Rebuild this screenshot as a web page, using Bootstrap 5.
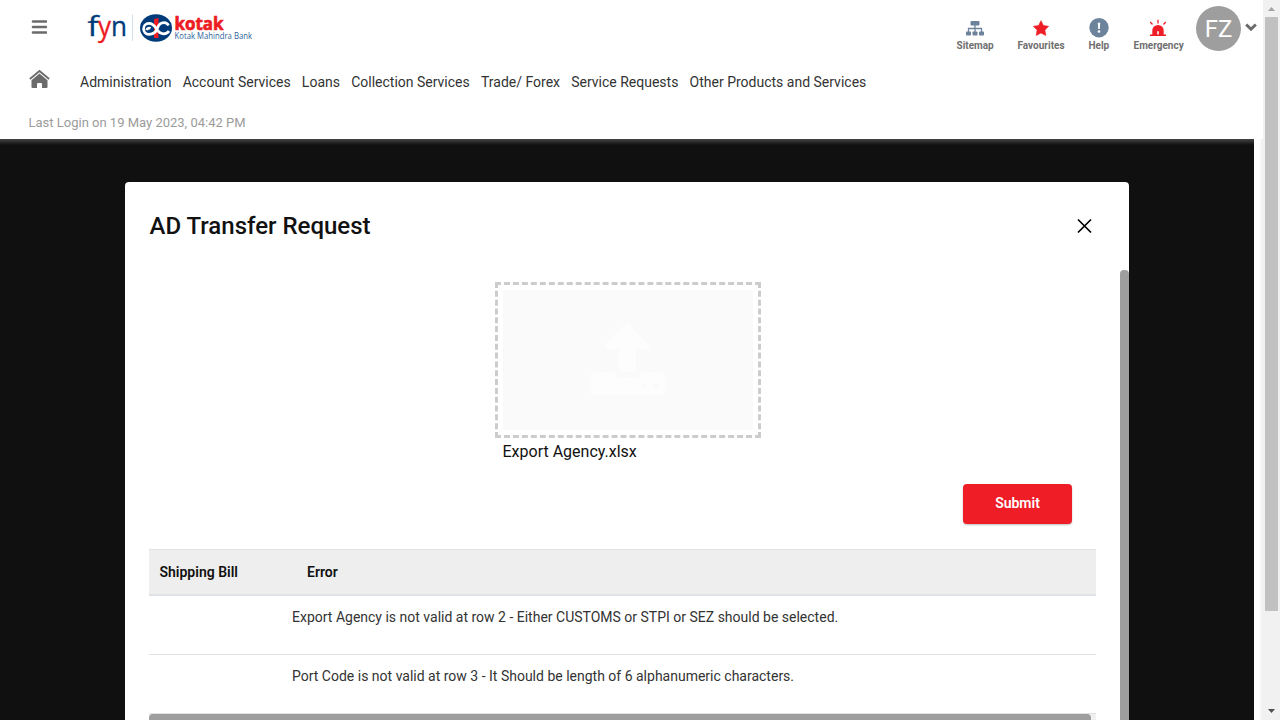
<!DOCTYPE html>
<html lang="en">
<head>
<meta charset="utf-8">
<meta name="viewport" content="width=device-width, initial-scale=1">
<title>AD Transfer Request</title>
<link href="https://cdn.jsdelivr.net/npm/bootstrap@5.3.0/dist/css/bootstrap.min.css" rel="stylesheet">
<style>
  body { font-family: Roboto, "Liberation Sans", sans-serif; height: 720px; overflow: hidden; color: #111; background: #fff; }
  svg { display: block; flex: none; }
  .page-main { width: 1263px; height: 720px; }
  .site-header { height: 139px; }
  .top-row { height: 58px; padding-left: 31px; padding-right: 6px; }
  .menu-btn { margin-top: 20px; }
  .brand-logo { margin: 8px 0 0 39px; overflow: visible; }
  .quick-links { gap: 23px; padding-top: 18px; margin-right: 12.5px; }
  .quick-link { font-size: 10px; line-height: 12px; font-weight: 700; color: #6f6f6f; white-space: nowrap; text-decoration: none; }
  .quick-link svg { margin: 0 auto 2px; transform: translateX(-1px); }
  .avatar { width: 45px; height: 45px; margin-top: 6px; background: #9e9e9e; color: #fff; font-size: 24px; }
  .chevron { margin: 23px 0 0 4px; }
  .main-nav { height: 48px; padding-left: 29px; }
  .main-nav .home { width: 51px; }
  .main-nav .nav-link { padding: 0; margin-right: 11.2px; font-size: 14px; line-height: 20px; color: #333; white-space: nowrap; }
  .last-login { font-size: 13px; line-height: 16px; color: #9b9b9b; padding: 9px 0 0 28.500px; }
  .backdrop-area { width: 1254px; background: linear-gradient(#444, #101010 6px); padding: 43px 125px 0; }
  .side-strip { width: 9px; background: linear-gradient(90deg, #fff 55%, #eee); }
  .dialog-box { height: 538px; border-radius: 4px 4px 0 0; overflow: hidden; }
  .dialog-head { height: 88px; padding: 0 36px 0 24.500px; }
  .dialog-head h1 { font-size: 24px; font-weight: 500; margin: 0; }
  .dialog-body { height: 450px; }
  .dialog-content { width: 995px; padding: 12px 24px 0; }
  .dialog-scroll { width: 9px; background: #9e9e9e; border-radius: 4px 4px 0 0; }
  .upload-wrap { width: 266px; margin-left: 346px; }
  .upload-box { height: 156px; border: 3px dashed #ccc; padding: 5px; }
  .upload-fill { background: #fafafa; height: 140px; }
  .file-name { font-size: 16px; line-height: 24px; padding: 2px 0 0 7.500px; }
  .btn-submit { width: 109px; height: 40px; background: #ee1d26; color: #fff; border: 0; border-radius: 4px; font-size: 14px; font-weight: 600; padding: 0 0 2px; box-shadow: 0 1px 2px rgba(0,0,0,.25); margin: 20px 24px 25px 0; }
  .error-table { font-size: 14px; line-height: 20px; border-collapse: separate; border-spacing: 0; border-top: 1px solid #dee2e6; table-layout: fixed; }
  .error-table th { background: #eee; height: 46px; font-weight: 600; padding: 0 10.500px; vertical-align: middle; border-bottom: 2px solid #dee2e6; color: #111; }
  .error-table th + th { padding-left: 15px; }
  .error-table td { height: 59px; padding: 11px 0 0; border-bottom: 1px solid #dee2e6; color: #333; }
  .h-scroll { height: 10px; background: #f1f1f1; }
  .h-thumb { width: 942px; height: 10px; background: #9e9e9e; border-radius: 4px; }
  .win-scroll { width: 17px; background: #f1f1f1; padding: 7px 0 7px; }
  .win-thumb { width: 13px; height: 594px; background: #c1c1c1; margin-top: 6px; }
</style>
</head>
<body class="d-flex">
<div class="page-main d-flex flex-column">
  <header class="site-header bg-white">
    <div class="top-row d-flex align-items-start">
      <svg class="menu-btn" width="16" height="14" viewBox="0 0 16 14" stroke="#6b6b6b" stroke-width="2.6" stroke-linecap="round"><path d="M2 1.500h13M2 7h13M2 12.500h13"/></svg>
      <svg class="brand-logo" width="170" height="40" viewBox="86 8 170 40">
        <g font-family="Open Sans" font-size="27" fill="#003b79" stroke="#003b79" stroke-width=".3">
          <text x="87.5" y="36" textLength="11" lengthAdjust="spacingAndGlyphs">f</text>
          <text x="98" y="36" fill="#ed1c24" stroke="#ed1c24" textLength="13" lengthAdjust="spacingAndGlyphs">y</text>
          <text x="111" y="36" textLength="16" lengthAdjust="spacingAndGlyphs">n</text>
        </g>
        <path d="M132.500 14.500V41" stroke="#d5deeb"/>
        <ellipse cx="156" cy="28" rx="16" ry="13.700" fill="#003b79"/>
        <path d="M154 19l4.500-1v20H154z" fill="#ed1c24"/>
        <path d="M168.500 25.500C167.500 23.300 165.800 22.600 164 22.600C160 22.600 158.500 25 157.500 28C156 32.500 153.500 34.300 149 34.300C141.800 34.300 141.800 23.300 149 23.300C157 23.300 155.500 33.800 163.500 33.800C166.500 33.800 168 32.800 169 31M150.500 28.500C149 27.600 147.500 28 146.500 30" fill="none" stroke="#fff" stroke-width="2.700"/>
        <text x="174.500" y="30" font-family="Open Sans" font-weight="700" font-size="17" fill="#ed1c24" stroke="#ed1c24" stroke-width=".7" textLength="49" lengthAdjust="spacingAndGlyphs">kotak</text>
        <text x="174.500" y="38.500" font-family="Open Sans" font-size="8.400" fill="#2c5f9b" textLength="77.500" lengthAdjust="spacingAndGlyphs">Kotak Mahindra Bank</text>
      </svg>
      <div class="quick-links d-flex ms-auto">
        <a class="quick-link" style="width:38px">
          <svg width="18" height="20" viewBox="0 0 18 20" fill="#6d839c"><rect x="4.500" y="3" width="9" height="4.500" rx="1"/><path d="M9 7v7M2.500 14v-3.500h13V14" fill="none" stroke="#6d839c" stroke-width="1.300"/><rect y="13.500" width="5" height="4" rx=".8"/><rect x="6.500" y="13.500" width="5" height="4" rx=".8"/><rect x="13" y="13.500" width="5" height="4" rx=".8"/></svg>Sitemap</a>
        <a class="quick-link" style="width:48px">
          <svg width="16" height="20" viewBox="0 0 16 20" fill="#ee1d26"><path d="M8 2.700l2.400 4.800 5.200.8-3.700 3.800.9 5.400L8 15l-4.800 2.500.9-5.400L.4 8.300l5.200-.8z" stroke="#ee1d26" stroke-width=".6" stroke-linejoin="round"/></svg>Favourites</a>
        <a class="quick-link" style="width:22px">
          <svg width="20" height="20" viewBox="0 0 20 20"><circle cx="10" cy="9.700" r="9.700" fill="#6d839c"/><path d="M8.800 4.700h2.400l-.4 6.300H9.200z" fill="#fff"/><circle cx="10" cy="13.500" r="1.300" fill="#fff"/></svg>Help</a>
        <a class="quick-link" style="width:50px">
          <svg width="18" height="20" viewBox="0 0 18 20"><path d="M3.300 16.500v-4a5.700 5.600 0 0 1 11.400 0v4H17v1.400H1v-1.400z" fill="#ee1d26"/><path d="M9 1.800v3.700M1.300 4l2.200 2.500M16.700 4l-2.200 2.500" stroke="#ee1d26" stroke-width="1.300"/><path d="M8.200 16.500V14a.8 1 0 0 1 1.600 0v2.500z" fill="#fff"/></svg>Emergency</a>
      </div>
      <div class="avatar rounded-circle d-flex align-items-center justify-content-center">FZ</div>
      <svg class="chevron" width="12" height="9" viewBox="0 0 12 9" fill="none" stroke="#6b6b6b" stroke-width="3"><path d="M1.200 1.500L6 6.200l4.800-4.700"/></svg>
    </div>
    <nav class="main-nav nav flex-nowrap align-items-center">
      <span class="home"><svg width="21" height="20" viewBox="0 0 21 20" style="margin-top:-7px"><path d="M.9 10L10.500 2l9.600 8" fill="none" stroke="#6b6b6b" stroke-width="1.800"/><path d="M2.500 11.200L10.500 4.600l8 6.600V18q0 1-1 1h-4.500v-4q0-1-1-1h-3q-1 0-1 1v4h-4.500q-1 0-1-1z" fill="#6b6b6b"/></svg></span>
      <a class="nav-link">Administration</a><a class="nav-link">Account Services</a><a class="nav-link">Loans</a><a class="nav-link">Collection Services</a><a class="nav-link">Trade/ Forex</a><a class="nav-link">Service Requests</a><a class="nav-link">Other Products and Services</a>
    </nav>
    <div class="last-login">Last Login on 19 May 2023, 04:42 PM</div>
  </header>
  <div class="d-flex flex-grow-1">
    <div class="backdrop-area">
      <section class="dialog-box bg-white">
        <div class="dialog-head d-flex align-items-center justify-content-between">
          <h1>AD Transfer Request</h1>
          <svg width="17" height="17" viewBox="0 0 17 17" stroke="#000" stroke-width="1.700"><path d="M2 1.500l13 13M15 1.500L2 14.500"/></svg>
        </div>
        <div class="dialog-body d-flex">
          <div class="dialog-content">
            <div class="upload-wrap">
              <div class="upload-box">
                <div class="upload-fill d-flex align-items-center justify-content-center">
                  <svg width="76" height="74" viewBox="0.500 0 76 74" fill="#fdfdfd"><path d="M38 1q1.500 0 3 1.500L60 22q2 4-1.500 4.500H46.500V46q0 3-3 3h-11q-3 0-3-3V26.500H17q-3-.8-1.500-4.500L35 2.500Q36.500 1 38 1z"/><path fill-rule="evenodd" d="M4 49.500h21q2 5 6 5h14q4 0 6-5h21q3 0 3 3V69q0 3-3 3H4q-3 0-3-3V52.500q0-3 3-3zM55 61a2.500 2.500 0 1 0 .1 0zM66.500 61a2.500 2.500 0 1 0 .1 0z"/></svg>
                </div>
              </div>
              <div class="file-name">Export Agency.xlsx</div>
            </div>
            <div class="d-flex justify-content-end"><button class="btn btn-submit" type="button">Submit</button></div>
            <table class="error-table w-100">
              <colgroup><col style="width:143px"><col></colgroup>
              <thead><tr><th>Shipping Bill</th><th>Error</th></tr></thead>
              <tbody>
                <tr><td></td><td class="align-top">Export Agency is not valid at row 2 - Either CUSTOMS or STPI or SEZ should be selected.</td></tr>
                <tr><td></td><td class="align-top">Port Code is not valid at row 3 - It Should be length of 6 alphanumeric characters.</td></tr>
              </tbody>
            </table>
            <div class="h-scroll"><div class="h-thumb"></div></div>
          </div>
          <div class="dialog-scroll"></div>
        </div>
      </section>
    </div>
    <div class="side-strip"></div>
  </div>
</div>
<div class="win-scroll d-flex flex-column align-items-center justify-content-between">
  <div class="d-flex flex-column align-items-center">
    <svg width="7" height="4" viewBox="0 0 7 4"><path d="M0 4L3.500 0 7 4z" fill="#a3a3a3"/></svg>
    <div class="win-thumb"></div>
  </div>
  <svg width="7" height="4" viewBox="0 0 7 4"><path d="M0 0h7L3.500 4z" fill="#505050"/></svg>
</div>
<script src="https://cdn.jsdelivr.net/npm/bootstrap@5.3.0/dist/js/bootstrap.bundle.min.js"></script>
</body>
</html>
